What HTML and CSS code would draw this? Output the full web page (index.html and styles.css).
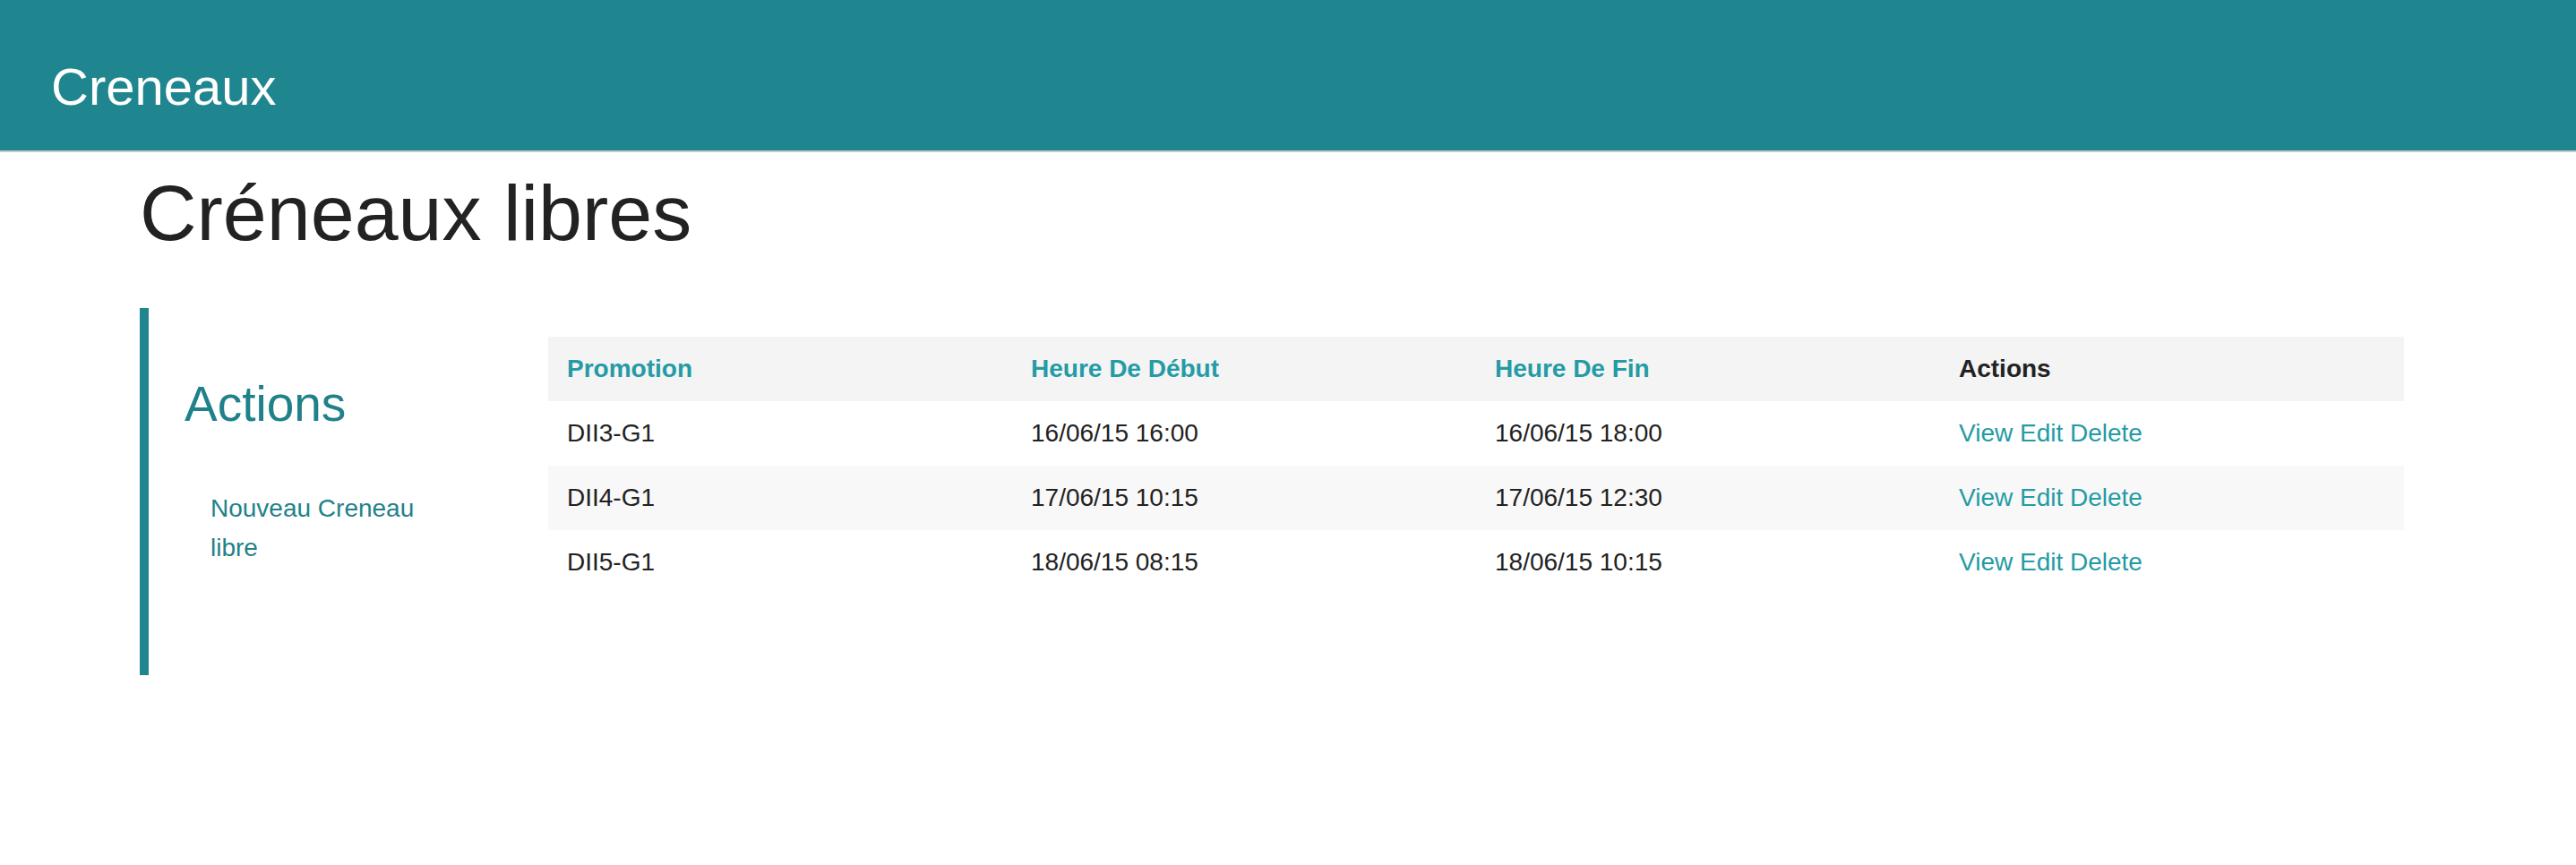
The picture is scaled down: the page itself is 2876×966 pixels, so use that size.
FILE: index.html
```html
<!DOCTYPE html>
<html lang="fr">
<head>
<meta charset="utf-8">
<title>Creneaux</title>
<link rel="stylesheet" href="styles.css">
</head>
<body>
<header class="top-bar">
  <h1 class="brand">Creneaux</h1>
</header>
<h1 class="page-title">Créneaux libres</h1>
<div class="main-row">
  <nav class="side-nav">
    <h2 class="side-heading">Actions</h2>
    <ul class="side-links">
      <li><a href="#">Nouveau Creneau libre</a></li>
    </ul>
  </nav>
  <table class="data-table">
    <thead>
      <tr>
        <th><a href="#">Promotion</a></th>
        <th><a href="#">Heure De Début</a></th>
        <th><a href="#">Heure De Fin</a></th>
        <th class="plain">Actions</th>
      </tr>
    </thead>
    <tbody>
      <tr>
        <td>DII3-G1</td>
        <td>16/06/15 16:00</td>
        <td>16/06/15 18:00</td>
        <td><a href="#">View</a> <a href="#">Edit</a> <a href="#">Delete</a></td>
      </tr>
      <tr class="alt">
        <td>DII4-G1</td>
        <td>17/06/15 10:15</td>
        <td>17/06/15 12:30</td>
        <td><a href="#">View</a> <a href="#">Edit</a> <a href="#">Delete</a></td>
      </tr>
      <tr>
        <td>DII5-G1</td>
        <td>18/06/15 08:15</td>
        <td>18/06/15 10:15</td>
        <td><a href="#">View</a> <a href="#">Edit</a> <a href="#">Delete</a></td>
      </tr>
    </tbody>
  </table>
</div>
</body>
</html>
```
FILE: styles.css
```css
html, body {
  margin: 0;
  padding: 0;
  background: #ffffff;
  font-family: "Liberation Sans", Arial, Helvetica, sans-serif;
  color: #222222;
}

a {
  text-decoration: none;
}

.top-bar {
  box-sizing: border-box;
  height: 170px;
  padding: 68px 0 0 57px;
  background: #1f858e;
  border-bottom: 2px solid #c9c9c9;
}

.brand {
  margin: 0;
  font-size: 58px;
  line-height: 58px;
  font-weight: normal;
  color: #ffffff;
}

.page-title {
  margin: 24px 0 0 156px;
  font-size: 88px;
  line-height: 88px;
  font-weight: normal;
  color: #222222;
}

.main-row {
  display: flex;
  align-items: flex-start;
  margin: 62px 0 0 156px;
}

.side-nav {
  box-sizing: border-box;
  width: 456px;
  flex: none;
  height: 410px;
  border-left: 10px solid #1f858e;
  padding: 77px 0 0 40px;
}

.side-heading {
  margin: 0;
  font-size: 55px;
  line-height: 60px;
  font-weight: normal;
  color: #1f818a;
}

.side-links {
  list-style: none;
  margin: 65px 0 0 29px;
  padding: 0;
  width: 250px;
}

.side-links a {
  font-size: 28px;
  line-height: 44px;
  color: #1f818a;
}

.data-table {
  margin-top: 32px;
  width: 2072px;
  table-layout: fixed;
  border-collapse: collapse;
  border-spacing: 0;
  font-size: 28px;
}

.data-table th,
.data-table td {
  height: 72px;
  padding: 0 0 0 21px;
  text-align: left;
  vertical-align: middle;
  line-height: 72px;
  white-space: nowrap;
}

.data-table thead tr {
  background: #f4f4f4;
}

.data-table th {
  font-weight: bold;
  color: #222222;
}

.data-table th a {
  color: #249ba5;
}

.data-table tr.alt {
  background: #f8f8f8;
}

.data-table td {
  color: #222222;
}

.data-table td a {
  color: #249ba5;
}
```
